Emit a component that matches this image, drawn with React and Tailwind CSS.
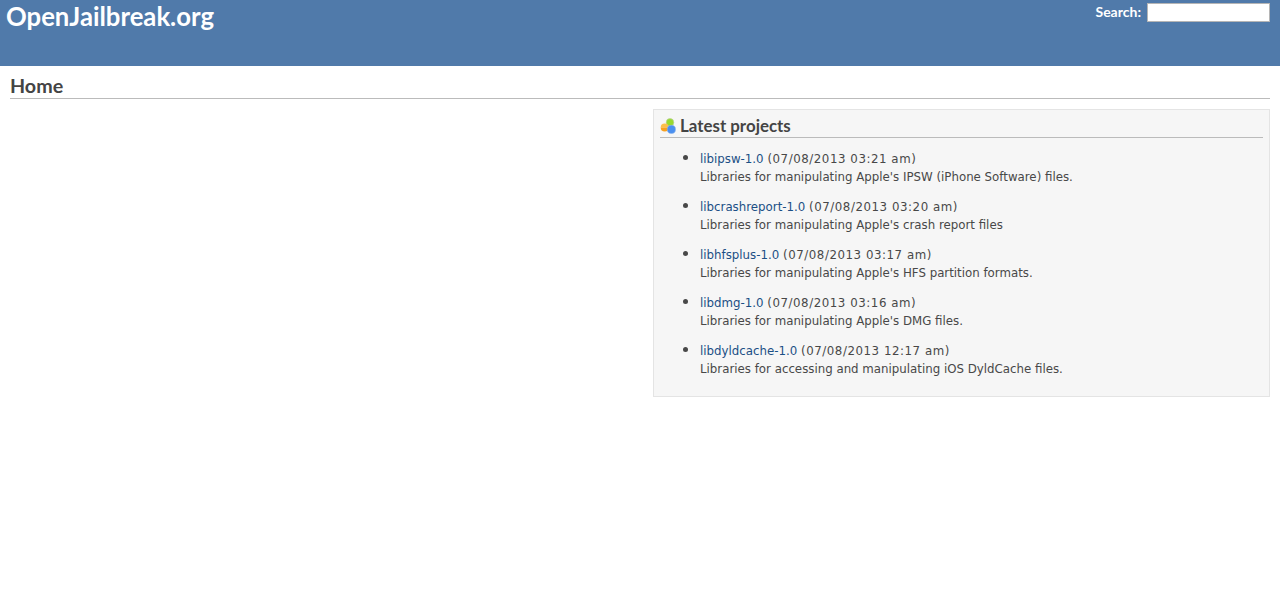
const projects = [
  ["libipsw-1.0", "(07/08/2013 03:21 am)", "Libraries for manipulating Apple's IPSW (iPhone Software) files."],
  ["libcrashreport-1.0", "(07/08/2013 03:20 am)", "Libraries for manipulating Apple's crash report files"],
  ["libhfsplus-1.0", "(07/08/2013 03:17 am)", "Libraries for manipulating Apple's HFS partition formats."],
  ["libdmg-1.0", "(07/08/2013 03:16 am)", "Libraries for manipulating Apple's DMG files."],
  ["libdyldcache-1.0", "(07/08/2013 12:17 am)", "Libraries for accessing and manipulating iOS DyldCache files."],
];

function ProjectsIcon() {
  return (
    <svg width="16" height="16" viewBox="0 0 16 16" className="shrink-0">
      <circle cx="10" cy="4.4" r="3.8" fill="#98d92f" stroke="#b9cf9a" strokeWidth="0.6" />
      <path d="M0.7 9.4a4 4 0 0 1 8 0z" fill="#fbbf4a" />
      <path d="M0.7 9.4a4 4 0 0 0 8 0z" fill="#f7a01f" />
      <circle cx="11.4" cy="11.4" r="4.1" fill="#4a8ff0" stroke="#8cb4e8" strokeWidth="0.6" />
    </svg>
  );
}

export default function App() {
  return (
    <div className="min-h-[610px] bg-white font-['DejaVu_Sans',Verdana,sans-serif] text-[11.8px] text-[#484848]">
      <header className="flex h-[66px] items-start justify-between bg-[#507aaa] pl-[6px] pr-[10px] text-white">
        <h1 className="mt-[1px] font-['Lato',sans-serif] text-[25.7px] font-bold leading-[30px]">OpenJailbreak.org</h1>
        <div className="mt-[3px] flex items-center">
          <span className="mr-[6px] pb-[2px] font-['Lato',sans-serif] text-[14px] font-bold leading-[15px]">Search:</span>
          <input className="box-border h-[19px] w-[123px] border border-[#b5b5b5] bg-white" />
        </div>
      </header>
      <main className="px-[10px] pt-[8px]">
        <h2 className="h-[25px] border-b border-[#bbbbbb] font-['Lato',sans-serif] text-[19.7px] font-bold leading-[24px] text-[#444444]">Home</h2>
        <div className="flex justify-end pt-[10px]">
          <section className="box-border h-[288px] w-[617px] border border-[#e4e4e4] bg-[#f6f6f6] px-[6px] pt-[5px]">
            <h3 className="flex h-[23px] items-center gap-[4px] border-b border-[#bbbbbb] font-['Lato',sans-serif] text-[16.9px] font-bold leading-[20px] text-[#444444]">
              <ProjectsIcon />
              Latest projects
            </h3>
            <ul className="mt-[11px] list-disc pl-[40px] leading-[18px] marker:text-[16px] marker:text-[#484848]">
              {projects.map(([name, date, text]) => (
                <li key={name} className="mb-[12px] h-[36px]">
                  <a href="#" className="text-[#1b4f85]">{name}</a> <span className="tracking-[0.55px]">{date}</span>
                  <br />
                  {text}
                </li>
              ))}
            </ul>
          </section>
        </div>
      </main>
    </div>
  );
}
